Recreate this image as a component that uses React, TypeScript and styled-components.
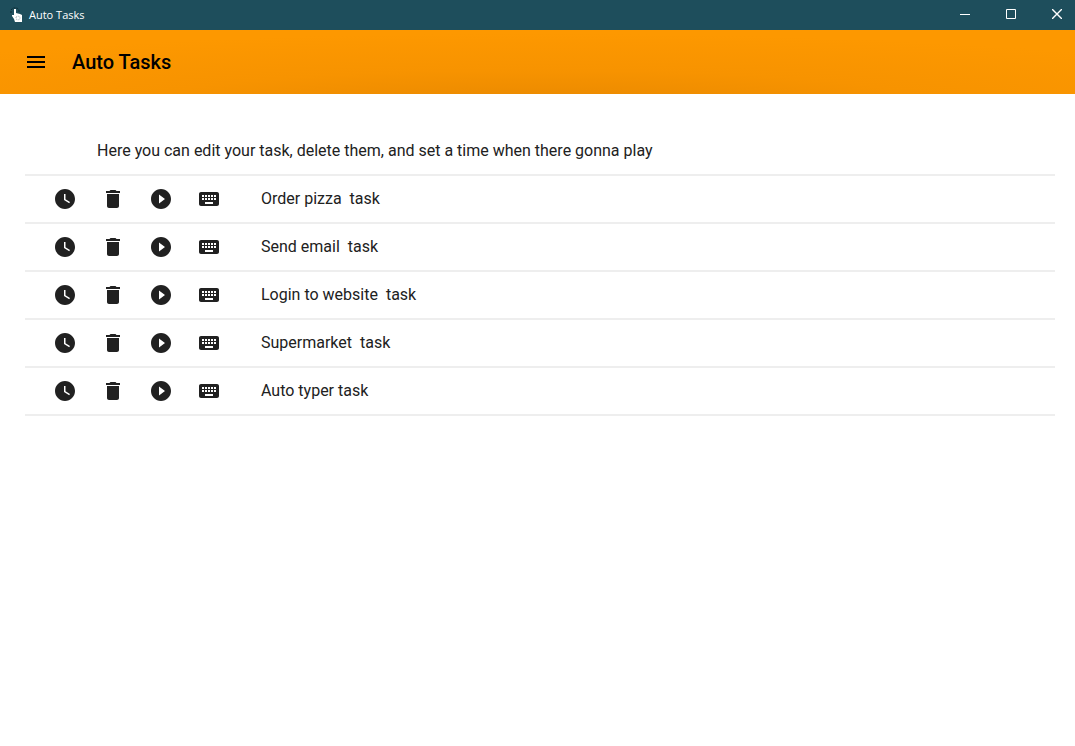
import React from "react";
import styled, { createGlobalStyle } from "styled-components";
import { MdDelete, MdKeyboard, MdMenu, MdPlayCircleFilled, MdWatchLater } from "react-icons/md";

const GlobalStyle = createGlobalStyle`
  * { box-sizing: border-box; }
  body {
    margin: 0;
    background: #ffffff;
    color: #212121;
    font-family: Roboto, "Noto Sans", sans-serif;
    font-size: 16px;
    line-height: 24px;
  }
`;

const Window = styled.div`
  display: flex;
  flex-direction: column;
  min-height: 100vh;
`;

const TitleBar = styled.header`
  display: flex;
  align-items: center;
  height: 30px;
  padding-left: 9px;
  background: #1e4e5c;
  color: #ffffff;
`;

const WindowTitle = styled.span`
  flex: 1;
  margin-left: 4px;
  font-family: "Open Sans", "Noto Sans", sans-serif;
  font-size: 11px;
  line-height: 16px;
`;

const WindowControls = styled.div`
  display: flex;
  gap: 10px;
`;

const WindowButton = styled.button`
  display: flex;
  align-items: center;
  justify-content: center;
  width: 36px;
  height: 30px;
  padding: 0 0 2px;
  border: 0;
  background: transparent;
  color: inherit;
`;

const AppBar = styled.div`
  display: flex;
  align-items: center;
  gap: 12px;
  height: 64px;
  padding: 0 12px;
  background: radial-gradient(ellipse 75% 115% at 50% 120%, #e88800, #f79300 50%, #fd9800 100%);
  color: #000000;
`;

const IconButton = styled.button`
  display: flex;
  align-items: center;
  justify-content: center;
  width: 48px;
  height: 48px;
  padding: 0;
  border: 0;
  background: transparent;
  color: inherit;
  font-size: 24px;
  cursor: pointer;
`;

const AppTitle = styled.h1`
  margin: 0;
  font-size: 20px;
  font-weight: 500;
  line-height: 32px;
`;

const Content = styled.main`
  padding: 32px 20px 24px 25px;
`;

const Intro = styled.p`
  margin: 0;
  padding: 13px 72px 11px;
  border-bottom: 2px solid #eeeeee;
`;

const TaskList = styled.ul`
  margin: 0;
  padding: 0;
  list-style: none;
`;

const TaskRow = styled.li`
  display: flex;
  align-items: center;
  height: 48px;
  padding: 0 16px;
  border-bottom: 2px solid #eeeeee;
`;

const TaskName = styled.span`
  margin-left: 28px;
  white-space: pre;
`;

const AppLogo = () => (
  <svg width="16" height="16" viewBox="0 0 16 16" aria-hidden="true">
    <path d="M2 6V4a3 3 0 0 1 3-3h2a3 3 0 0 1 3 3v1" fill="none" stroke="#0c2a33" strokeWidth="1" strokeDasharray="2 1" />
    <path d="M5 2h2v4l4 1 2 1v7H6l-1-3-2-3V8h2z" fill="#ffffff" />
    <path d="M7 10l2-1 2 1v2l-2 1-2-1z" fill="none" stroke="#a5b4b9" strokeWidth="1" strokeDasharray="1 1" />
  </svg>
);

const windowGlyphs = [
  { label: "Minimize", path: "M0 5.5h10", weight: 1 },
  { label: "Maximize", path: "M.5 .5h9v9h-9z", weight: 1 },
  { label: "Close", path: "M0 0l10 10M10 0L0 10", weight: 1.4 },
];

const actions = [
  { label: "Schedule", Icon: MdWatchLater },
  { label: "Delete", Icon: MdDelete },
  { label: "Play", Icon: MdPlayCircleFilled },
  { label: "Edit keys", Icon: MdKeyboard },
];

const tasks = [
  "Order pizza  task",
  "Send email  task",
  "Login to website  task",
  "Supermarket  task",
  "Auto typer task",
];

export default function App() {
  return (
    <Window>
      <GlobalStyle />
      <TitleBar>
        <AppLogo />
        <WindowTitle>Auto Tasks</WindowTitle>
        <WindowControls>
          {windowGlyphs.map(({ label, path, weight }) => (
            <WindowButton key={label} aria-label={label}>
              <svg width="10" height="10" viewBox="0 0 10 10" aria-hidden="true">
                <path d={path} fill="none" stroke="currentColor" strokeWidth={weight} />
              </svg>
            </WindowButton>
          ))}
        </WindowControls>
      </TitleBar>
      <AppBar>
        <IconButton aria-label="Open menu">
          <MdMenu />
        </IconButton>
        <AppTitle>Auto Tasks</AppTitle>
      </AppBar>
      <Content>
        <Intro>Here you can edit your task, delete them, and set a time when there gonna play</Intro>
        <TaskList>
          {tasks.map((task) => (
            <TaskRow key={task}>
              {actions.map(({ label, Icon }) => (
                <IconButton key={label} aria-label={`${label}: ${task}`}>
                  <Icon />
                </IconButton>
              ))}
              <TaskName>{task}</TaskName>
            </TaskRow>
          ))}
        </TaskList>
      </Content>
    </Window>
  );
}
